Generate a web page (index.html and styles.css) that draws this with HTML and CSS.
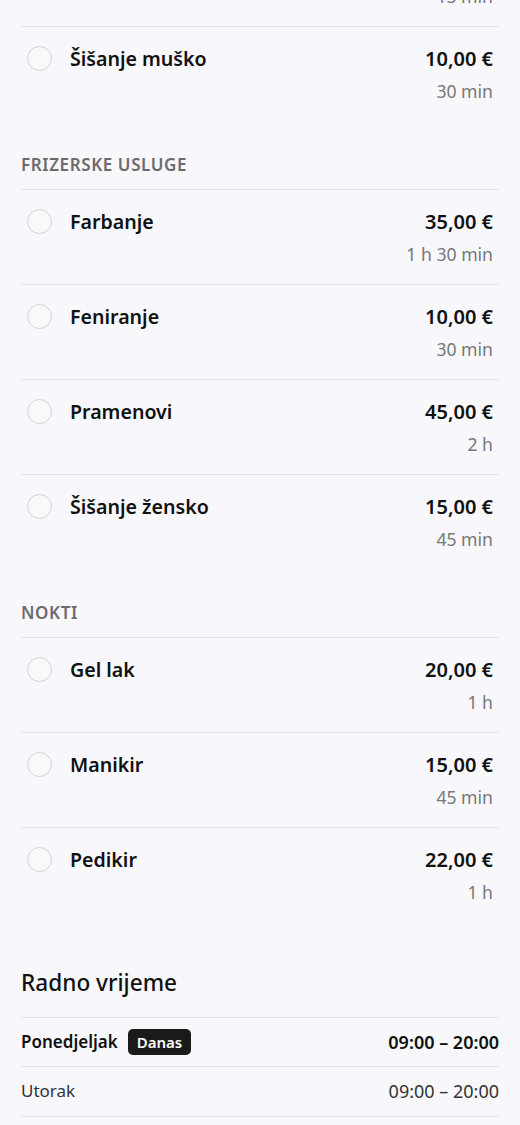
FILE: index.html
```html
<!DOCTYPE html>
<html lang="hr">
<head>
<meta charset="utf-8">
<title>Usluge</title>
<link rel="stylesheet" href="styles.css">
</head>
<body>
<main class="page">
  <section class="group group-first">
    <div class="row">
      <span class="radio"></span>
      <span class="name">Brijanje</span>
      <div class="meta"><span class="price">5,00 €</span><span class="dur">15 min</span></div>
    </div>
    <div class="row">
      <span class="radio"></span>
      <span class="name">Šišanje muško</span>
      <div class="meta"><span class="price">10,00 €</span><span class="dur">30 min</span></div>
    </div>
  </section>

  <section class="group">
    <h3 class="group-title">FRIZERSKE USLUGE</h3>
    <div class="row">
      <span class="radio"></span>
      <span class="name">Farbanje</span>
      <div class="meta"><span class="price">35,00 €</span><span class="dur">1 h 30 min</span></div>
    </div>
    <div class="row">
      <span class="radio"></span>
      <span class="name">Feniranje</span>
      <div class="meta"><span class="price">10,00 €</span><span class="dur">30 min</span></div>
    </div>
    <div class="row">
      <span class="radio"></span>
      <span class="name">Pramenovi</span>
      <div class="meta"><span class="price">45,00 €</span><span class="dur">2 h</span></div>
    </div>
    <div class="row">
      <span class="radio"></span>
      <span class="name">Šišanje žensko</span>
      <div class="meta"><span class="price">15,00 €</span><span class="dur">45 min</span></div>
    </div>
  </section>

  <section class="group">
    <h3 class="group-title">NOKTI</h3>
    <div class="row">
      <span class="radio"></span>
      <span class="name">Gel lak</span>
      <div class="meta"><span class="price">20,00 €</span><span class="dur">1 h</span></div>
    </div>
    <div class="row">
      <span class="radio"></span>
      <span class="name">Manikir</span>
      <div class="meta"><span class="price">15,00 €</span><span class="dur">45 min</span></div>
    </div>
    <div class="row">
      <span class="radio"></span>
      <span class="name">Pedikir</span>
      <div class="meta"><span class="price">22,00 €</span><span class="dur">1 h</span></div>
    </div>
  </section>

  <section class="hours">
    <h2 class="hours-title">Radno vrijeme</h2>
    <div class="hrow today">
      <span class="day">Ponedjeljak <span class="badge">Danas</span></span>
      <span class="time">09:00 – 20:00</span>
    </div>
    <div class="hrow">
      <span class="day">Utorak</span>
      <span class="time">09:00 – 20:00</span>
    </div>
    <div class="hrow">
      <span class="day">Srijeda</span>
      <span class="time">09:00 – 20:00</span>
    </div>
  </section>
</main>
</body>
</html>
```

FILE: styles.css
```css
html, body {
  margin: 0;
  padding: 0;
  background: #f8f7fc;
}
body {
  font-family: "Noto Sans", "Open Sans", sans-serif;
  color: #111111;
}
.page {
  padding: 0 21px 40px;
  margin-top: -69px;
}
.group {
  padding-top: 33px;
}
.group-first {
  padding-top: 0;
}
.group-title {
  margin: 0 0 13px;
  font-size: 17px;
  line-height: 22px;
  font-weight: 600;
  color: #6e6a6b;
  letter-spacing: 0.6px;
}
.row {
  display: grid;
  grid-template-columns: 26px 1fr auto;
  column-gap: 17px;
  align-items: start;
  padding: 18px 6px;
  border-top: 1px solid #e4e3e8;
}
.radio {
  width: 23px;
  height: 23px;
  margin-top: 1px;
  border: 1.5px solid #d3d3d6;
  border-radius: 50%;
  background: #f9f9fc;
}
.name {
  font-size: 19.6px;
  line-height: 28px;
  font-weight: 600;
}
.meta {
  display: flex;
  flex-direction: column;
  align-items: flex-end;
  gap: 6px;
}
.price {
  font-size: 20px;
  line-height: 28px;
  font-weight: 600;
}
.dur {
  font-size: 17.6px;
  line-height: 24px;
  color: #777777;
}
.hours {
  padding-top: 46px;
}
.hours-title {
  margin: 0 0 19px;
  font-size: 22.6px;
  line-height: 30px;
  font-weight: 500;
}
.hrow {
  display: flex;
  justify-content: space-between;
  align-items: center;
  min-height: 26px;
  padding: 11px 0 12px;
  border-top: 1px solid #e4e3e8;
  font-size: 17px;
  line-height: 24px;
  color: #333333;
}
.today {
  font-weight: 600;
  color: #111111;
  padding: 11px 0;
}
.time {
  font-size: 18px;
}
.day {
  display: flex;
  align-items: center;
  gap: 10px;
}
.badge {
  display: inline-flex;
  align-items: center;
  height: 26px;
  padding: 0 9px;
  border-radius: 5px;
  background: #1a1a1a;
  color: #ffffff;
  font-size: 15px;
  font-weight: 600;
}
```
